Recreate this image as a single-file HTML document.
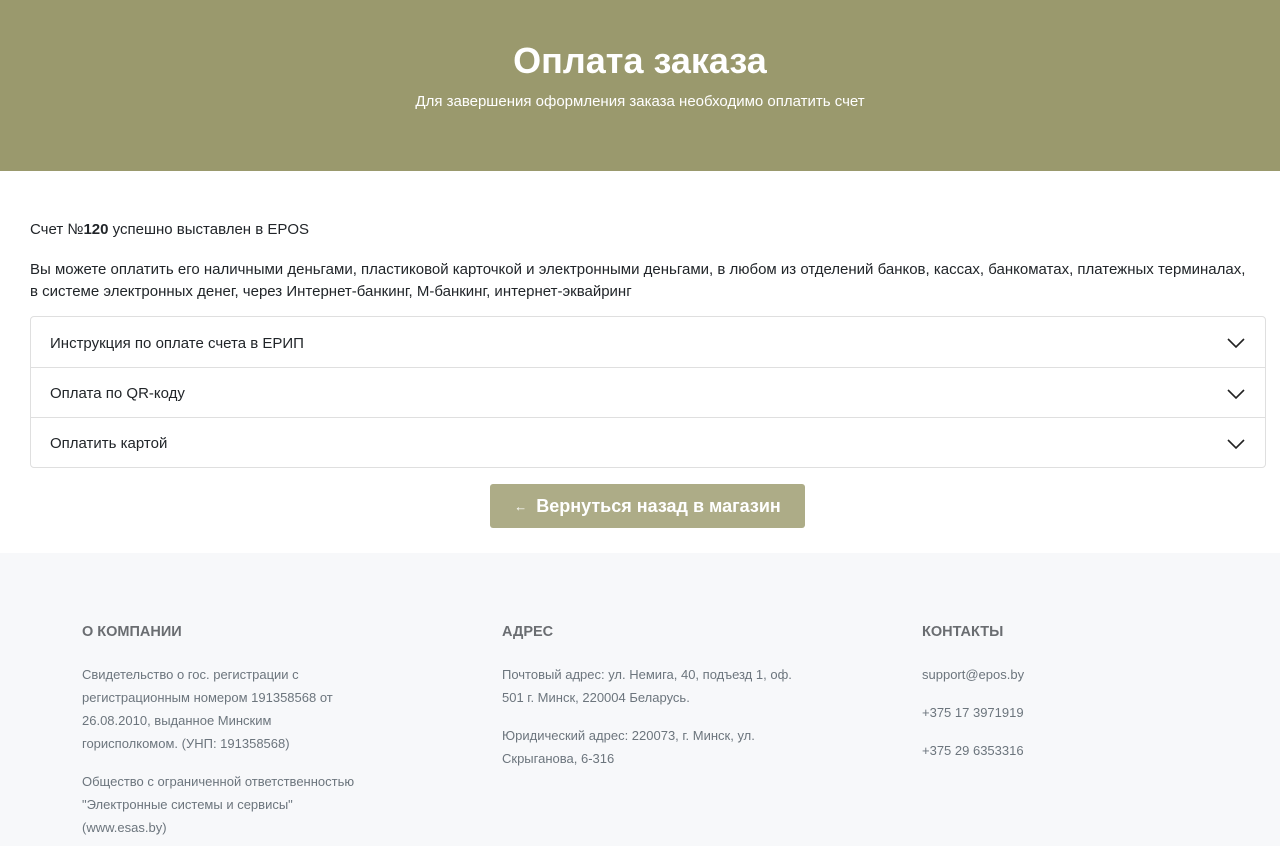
<!DOCTYPE html>
<html><head><meta charset="utf-8"><style>
*{margin:0;padding:0;box-sizing:border-box}
body{width:1280px;height:846px;overflow:hidden;font-family:"Liberation Sans",sans-serif;color:#212529;background:#fff}
.hdr{height:171px;background:#9a996d;text-align:center;color:#fff;padding-top:39px}
.hdr h1{font-size:36px;font-weight:bold;line-height:44px}
.hdr p{font-size:15px;margin-top:10px}
.main{padding:48px 14px 0 30px;font-size:15px}
.main p{line-height:22px}
.acc{border:1px solid #dfdfdf;border-radius:4px;width:1236px}
.it{height:50px;border-top:1px solid #dfdfdf;display:flex;align-items:center;justify-content:space-between;padding:2px 20px 0 19px;font-size:15px}
.it:first-child{border-top:0}
.btn{position:absolute;left:490px;top:484px;width:315px;height:44px;background:#adac87;border-radius:3px;color:#fff;font-size:18px;font-weight:bold;display:flex;align-items:center;justify-content:center}
.ft{position:absolute;top:553px;left:0;width:1280px;height:293px;background:#f7f8fa}
.col{position:absolute;top:70px;width:320px;color:#6c757d;font-size:13px;line-height:23px}
.col h4{font-size:14.5px;color:#6a6d71;font-weight:bold;margin-bottom:22px;line-height:18px}
.col p{margin-bottom:15px}
</style></head><body>
<div class="hdr"><h1>Оплата заказа</h1><p>Для завершения оформления заказа необходимо оплатить счет</p></div>
<div class="main">
<p>Счет №<b>120</b> успешно выставлен в EPOS</p>
<p style="margin-top:18px">Вы можете оплатить его наличными деньгами, пластиковой карточкой и электронными деньгами, в любом из отделений банков, кассах, банкоматах, платежных терминалах,<br>в системе электронных денег, через Интернет-банкинг, М-банкинг, интернет-эквайринг</p>
<div class="acc" style="margin-top:13px">
<div class="it"><span>Инструкция по оплате счета в ЕРИП</span><svg width="18" height="10" viewBox="0 0 18 10"><path d="M1 1l8 8 8-8" fill="none" stroke="#222" stroke-width="1.6"/></svg></div>
<div class="it"><span>Оплата по QR-коду</span><svg width="18" height="10" viewBox="0 0 18 10"><path d="M1 1l8 8 8-8" fill="none" stroke="#222" stroke-width="1.6"/></svg></div>
<div class="it"><span>Оплатить картой</span><svg width="18" height="10" viewBox="0 0 18 10"><path d="M1 1l8 8 8-8" fill="none" stroke="#222" stroke-width="1.6"/></svg></div>
</div>
</div>
<div class="btn"><span style="font-size:13px;margin-right:9px">←</span>Вернуться назад в магазин</div>
<div class="ft">
<div class="col" style="left:82px"><h4>О КОМПАНИИ</h4><p>Свидетельство о гос. регистрации с<br>регистрационным номером 191358568 от<br>26.08.2010, выданное Минским<br>горисполкомом. (УНП: 191358568)</p><p>Общество с ограниченной ответственностью<br>"Электронные системы и сервисы"<br>(www.esas.by)</p></div>
<div class="col" style="left:502px"><h4>АДРЕС</h4><p>Почтовый адрес: ул. Немига, 40, подъезд 1, оф.<br>501 г. Минск, 220004 Беларусь.</p><p>Юридический адрес: 220073, г. Минск, ул.<br>Скрыганова, 6-316</p></div>
<div class="col" style="left:922px"><h4>КОНТАКТЫ</h4><p>support@epos.by</p><p>+375 17 3971919</p><p>+375 29 6353316</p></div>
</div>
</body></html>
